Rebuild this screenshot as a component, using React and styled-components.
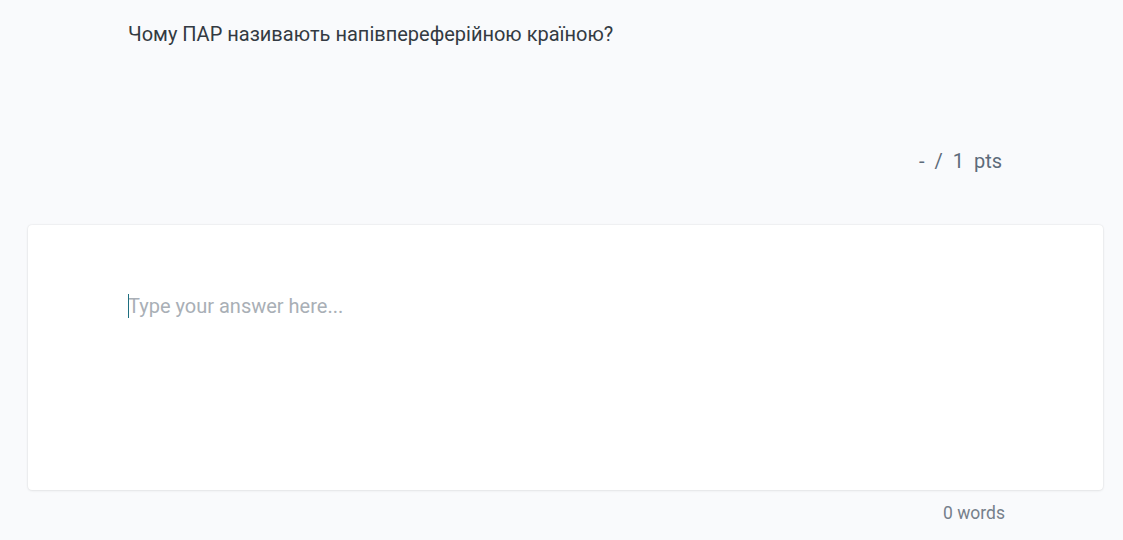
import React from "react";
import styled, { createGlobalStyle } from "styled-components";

const Global = createGlobalStyle`
  html, body { margin: 0; padding: 0; background: #f9fafc; }
  body { font-family: Roboto, "Noto Sans", sans-serif; }
`;

const Page = styled.div`
  width: 1123px;
  height: 540px;
  box-sizing: border-box;
  padding: 0 20px 0 28px;
  display: flex;
  flex-direction: column;
`;

const Question = styled.div`
  flex: none;
  box-sizing: border-box;
  height: 144px;
  padding: 22px 0 0 100px;
  font-size: 20px;
  line-height: 24px;
  color: #333a42;
`;

const PointsRow = styled.div`
  flex: none;
  display: flex;
  justify-content: flex-end;
  padding-right: 101px;
  height: 81px;
  box-sizing: border-box;
  padding-top: 2px;
`;

const Points = styled.span`
  font-size: 20px;
  line-height: 30px;
  color: #5d6b7a;
  word-spacing: 5px;
`;

const Card = styled.div`
  flex: none;
  background: #fff;
  border-radius: 4px;
  box-shadow: 0 0 2px rgba(0, 0, 0, 0.12), 0 1px 3px rgba(0, 0, 0, 0.06);
  height: 265px;
  padding: 69px 100px 0 100px;
  box-sizing: border-box;
`;

const Answer = styled.div`
  position: relative;
  font-size: 20px;
  line-height: 24px;
  color: #a9afb6;
`;

const Caret = styled.span`
  position: absolute;
  left: 0;
  top: 0;
  width: 1px;
  height: 24px;
  background: #1e6f80;
`;

const Footer = styled.div`
  display: flex;
  justify-content: flex-end;
  padding-right: 98px;
  padding-top: 12px;
`;

const Words = styled.span`
  font-size: 17.5px;
  line-height: 22px;
  color: #76808b;
`;

export default function App() {
  return (
    <>
      <Global />
      <Page>
        <Question>Чому ПАР називають напівпереферійною країною?</Question>
        <PointsRow>
          <Points>- / 1 pts</Points>
        </PointsRow>
        <Card>
          <Answer>
            <Caret />
            Type your answer here...
          </Answer>
        </Card>
        <Footer>
          <Words>0 words</Words>
        </Footer>
      </Page>
    </>
  );
}
